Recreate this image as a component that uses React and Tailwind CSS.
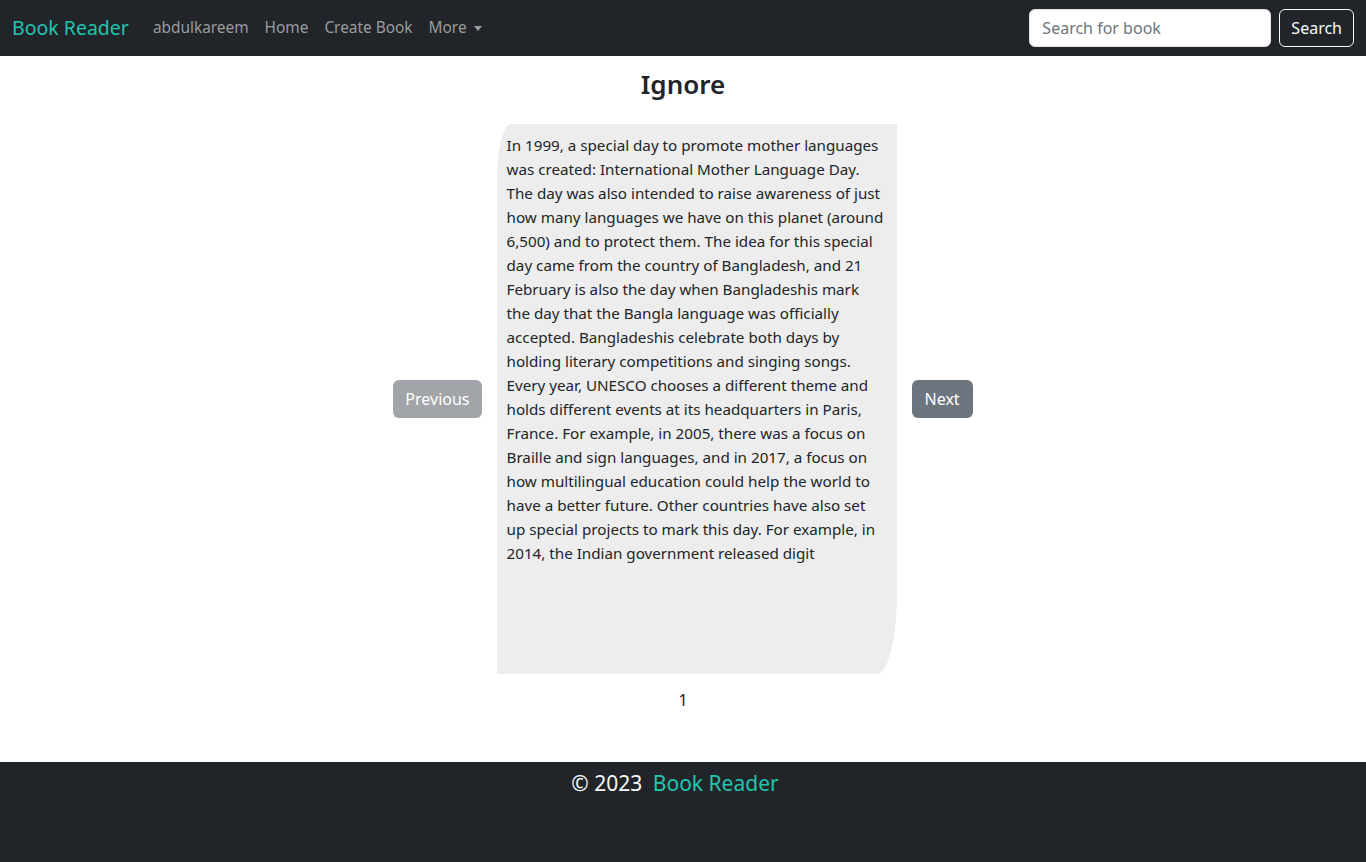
const lines = [
  'In 1999, a special day to promote mother languages',
  'was created: International Mother Language Day.',
  'The day was also intended to raise awareness of just',
  'how many languages we have on this planet (around',
  '6,500) and to protect them. The idea for this special',
  'day came from the country of Bangladesh, and 21',
  'February is also the day when Bangladeshis mark',
  'the day that the Bangla language was officially',
  'accepted. Bangladeshis celebrate both days by',
  'holding literary competitions and singing songs.',
  'Every year, UNESCO chooses a different theme and',
  'holds different events at its headquarters in Paris,',
  'France. For example, in 2005, there was a focus on',
  'Braille and sign languages, and in 2017, a focus on',
  'how multilingual education could help the world to',
  'have a better future. Other countries have also set',
  'up special projects to mark this day. For example, in',
  '2014, the Indian government released digit',
];

const Navbar = () => (
  <nav className="h-14 bg-[#212529] flex items-center justify-between px-3">
    <div className="flex items-center">
      <a className="text-[19.5px] text-[#20c5ae] mr-4 leading-[30px]">Book Reader</a>
      <ul className="flex items-center text-[15.4px] text-[#9a9c9f]">
        <li className="px-2">abdulkareem</li>
        <li className="px-2">Home</li>
        <li className="px-2">Create Book</li>
        <li className="px-2 flex items-center">
          More
          <span className="ml-[7px] mt-[1px] w-0 h-0 border-x-[4.5px] border-x-transparent border-t-[5px] border-t-[#9a9c9f]" />
        </li>
      </ul>
    </div>
    <form className="flex items-center gap-2">
      <input
        placeholder="Search for book"
        className="w-[242px] h-[38px] bg-white rounded-md border border-[#dee2e6] px-3 text-[#212529] placeholder:text-[#6c757d] outline-none"
      />
      <button type="button" className="h-[38px] px-[11px] rounded-md border border-[#f8f9fa] text-[#f8f9fa]">
        Search
      </button>
    </form>
  </nav>
);

export default function App() {
  return (
    <div className="min-h-[862px] flex flex-col bg-white text-[#212529] text-base leading-6" style={{ fontFamily: '"Noto Sans", sans-serif' }}>
      <Navbar />
      <main className="flex flex-col items-center">
        <h2 className="text-[26px] font-semibold leading-[34px] mt-[11px] mb-[23px]">Ignore</h2>
        <div className="flex items-center gap-[15px]">
          <button type="button" className="h-[38px] px-3 rounded-md bg-[#a1a5a9] text-white">Previous</button>
          <div className="w-[400px] h-[550px] bg-[#ededed] pt-[9px] px-[10px] text-[15.2px] rounded-tl-[14px_55px] rounded-br-[20px_80px]">
            {lines.map((l) => (
              <span key={l} className="block whitespace-nowrap">{l}</span>
            ))}
          </div>
          <button type="button" className="h-[38px] px-[13px] rounded-md bg-[#6c757d] text-white">Next</button>
        </div>
        <p className="mt-[14px] mb-[50px]">1</p>
      </main>
      <footer className="bg-[#212529] h-[100px] flex justify-center">
        <p className="text-[21px] leading-[42px] text-[#f8f9fa] pr-[16px]">
          © 2023 <span className="text-[#20c5ae] ml-[5px]">Book Reader</span>
        </p>
      </footer>
    </div>
  );
}
